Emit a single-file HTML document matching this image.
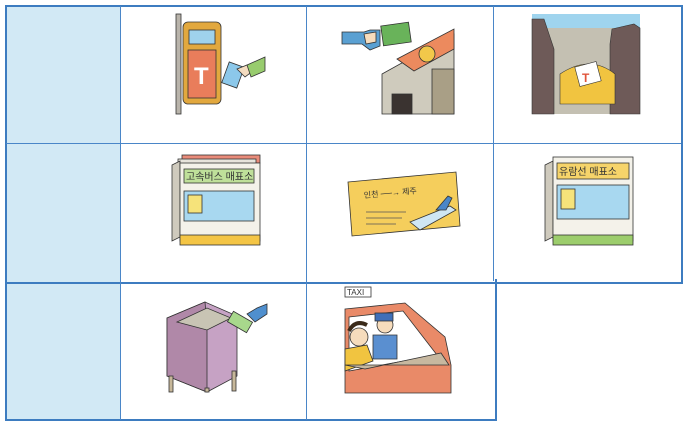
<!DOCTYPE html>
<html><head><meta charset="utf-8"><style>
body{margin:0;width:685px;height:427px;background:#fff;position:relative;overflow:hidden;font-family:"Liberation Sans","Noto Sans CJK KR",sans-serif}
.a{position:absolute}
.lb{background:#d2e9f5}
.h{position:absolute;height:1px;background:#4a86c8}
.v{position:absolute;width:1px;background:#4a86c8}
svg{position:absolute;overflow:visible}
</style></head><body>
<div class="a lb" style="left:6px;top:6px;width:114px;height:414px"></div>
<div class="a" style="left:5px;top:5px;width:674px;height:275px;border:2px solid #3d7cc0"></div>
<div class="a" style="left:5px;top:279px;width:488px;height:140px;border:2px solid #3d7cc0;border-top:none"></div>
<div class="v" style="left:120px;top:6px;height:414px"></div>
<div class="v" style="left:306px;top:6px;height:414px"></div>
<div class="v" style="left:493px;top:6px;height:275px"></div>
<div class="h" style="left:6px;top:143px;width:675px"></div>

<!-- r1c1 -->
<svg style="left:175px;top:14px" width="100" height="100" stroke="#333" stroke-width="0.8">
<rect x="1" y="0" width="5" height="100" fill="#b9b4ab"/>
<rect x="8" y="8" width="38" height="82" rx="5" fill="#e2a83e"/>
<rect x="14" y="16" width="26" height="14" fill="#9fd2ec"/>
<rect x="13" y="36" width="28" height="48" fill="#e97d5b"/>
<text x="19" y="70" font-size="24" fill="#fff" stroke="none" font-weight="bold">T</text>
<rect x="50" y="50" width="16" height="22" fill="#8cc8ea" transform="rotate(20 58 61)"/>
<path d="M62 55 l10 -4 l6 6 l-8 6z" fill="#f4dcc0"/>
<path d="M72 51 l18 -8 v14 l-14 6z" fill="#98cc6e"/>
</svg>
<!-- r1c2 -->
<svg style="left:342px;top:14px" width="112" height="100" stroke="#333" stroke-width="0.8">
<path d="M0 18 h22 l6 -2 l10 0 v16 l-10 4 l-8 -6 h-20z" fill="#5aa0d2"/>
<path d="M22 20 l12 -2 v10 l-10 2z" fill="#f6dcbc"/>
<rect x="40" y="10" width="28" height="20" fill="#69b35a" transform="rotate(-8 54 20)"/>
<path d="M40 60 l72 -40 v80 h-72z" fill="#cfcbbd"/>
<path d="M55 45 l57 -30 v20 l-40 22z" fill="#ec8a5e"/>
<circle cx="85" cy="40" r="8" fill="#f2c84a"/>
<path d="M90 55 h22 v45 h-22z" fill="#a99f86"/>
<rect x="50" y="80" width="20" height="20" fill="#3a3330"/>
</svg>
<!-- r1c3 -->
<svg style="left:532px;top:14px" width="108" height="100" stroke="#333" stroke-width="0.6">
<rect x="0" y="0" width="108" height="100" fill="#c4c0b2" stroke="none"/>
<rect x="0" y="0" width="108" height="14" fill="#9fd4ee" stroke="none"/>
<path d="M0 5 l12 0 l10 30 v65 h-22z" fill="#6e5a58"/>
<path d="M80 15 l22 -5 l6 4 v86 h-30 v-70z" fill="#6e5a58"/>
<path d="M28 60 q30 -20 55 0 v30 h-55z" fill="#f1c440"/>
<rect x="45" y="50" width="22" height="20" fill="#fff" transform="rotate(-15 56 60)"/>
<text x="50" y="68" font-size="12" fill="#e0553b" stroke="none" font-weight="bold">T</text>
</svg>

<!-- r2c1 -->
<svg style="left:172px;top:155px" width="88" height="94" stroke="#333" stroke-width="0.8">
<rect x="10" y="0" width="78" height="8" fill="#e98b7a"/>
<rect x="6" y="4" width="78" height="8" fill="#e7e4dc"/>
<path d="M0 10 l8 -4 v76 l-8 4z" fill="#cfcabd"/>
<rect x="8" y="8" width="80" height="78" fill="#f4f2ea"/>
<rect x="12" y="14" width="70" height="14" fill="#bfe09a"/>
<text x="14" y="25" font-size="10" stroke="none" fill="#333">고속버스 매표소</text>
<rect x="12" y="36" width="70" height="30" fill="#a8d8f0"/>
<rect x="16" y="40" width="14" height="18" fill="#f6e37a"/>
<rect x="8" y="80" width="80" height="10" fill="#f4c545"/>
</svg>
<!-- r2c2 -->
<svg style="left:348px;top:170px" width="112" height="70" stroke="#333" stroke-width="0.8">
<path d="M0 12 L108 2 L112 56 L4 66z" fill="#f5ce5c"/>
<text x="16" y="28" font-size="8" stroke="none" fill="#333" transform="rotate(-5 16 28)">인천 ──→ 제주</text>
<path d="M18 42 h40 M18 48 h36 M18 54 h30" stroke="#555"/>
<path d="M62 52 l40 -16 l6 4 l-36 20z" fill="#cfe6f4"/>
<path d="M88 40 l12 -14 l4 2 l-6 12z" fill="#4a86c8"/>
</svg>
<!-- r2c3 -->
<svg style="left:545px;top:155px" width="90" height="92" stroke="#333" stroke-width="0.8">
<path d="M0 10 l8 -4 v76 l-8 4z" fill="#cfcabd"/>
<rect x="8" y="2" width="80" height="84" fill="#f4f2ea"/>
<rect x="12" y="8" width="72" height="16" fill="#f6d46a"/>
<text x="14" y="20" font-size="10" stroke="none" fill="#333">유람선 매표소</text>
<rect x="12" y="30" width="72" height="34" fill="#a8d8f0"/>
<rect x="16" y="34" width="14" height="20" fill="#f6e37a"/>
<rect x="8" y="80" width="80" height="10" fill="#9ccd6c"/>
</svg>

<!-- r3c1 -->
<svg style="left:165px;top:296px" width="110" height="96" stroke="#333" stroke-width="0.8">
<path d="M2 18 L35 4 L75 18 L75 92 L2 92z" fill="none" stroke="none"/>
<path d="M2 22 L40 6 L72 20 L72 80 L42 96 L2 80z" fill="#c6a2c4"/>
<path d="M2 22 L40 6 L42 30 L42 96 L2 80z" fill="#b088a8"/>
<path d="M12 26 l30 -14 l24 10 l-24 12z" fill="#c8c4b4"/>
<rect x="4" y="80" width="4" height="16" fill="#c7b89a"/>
<rect x="40" y="92" width="4" height="4" fill="#c7b89a"/>
<rect x="67" y="75" width="4" height="20" fill="#c7b89a"/>
<rect x="64" y="20" width="22" height="12" fill="#a8d88c" transform="rotate(30 75 26)"/>
<path d="M82 18 l10 -6 l10 -4 v10 l-12 8z" fill="#4f8fce"/>
</svg>
<!-- r3c2 -->
<svg style="left:345px;top:287px" width="108" height="106" stroke="#333" stroke-width="0.8">
<rect x="0" y="0" width="26" height="10" fill="#fff"/>
<text x="2" y="8" font-size="8" stroke="none" fill="#333">TAXI</text>
<path d="M0 22 L60 16 L100 50 L106 78 V106 H0z" fill="#e98a68"/>
<path d="M4 30 L58 24 L92 68 L4 84z" fill="#fff"/>
<circle cx="14" cy="50" r="9" fill="#f6dcbc"/>
<path d="M4 44 q6 -12 18 -6" stroke="#3a2a1a" stroke-width="4" fill="none"/>
<path d="M0 62 l22 -4 l6 16 l-28 10z" fill="#f1c440"/>
<circle cx="40" cy="38" r="8" fill="#f6dcbc"/>
<rect x="30" y="26" width="18" height="8" fill="#3f6fb8"/>
<path d="M28 48 h24 v24 h-24z" fill="#5a8fd0"/>
<path d="M20 82 L96 66 L104 78 H0z" fill="#c7b8a0"/>
</svg>
</body></html>
